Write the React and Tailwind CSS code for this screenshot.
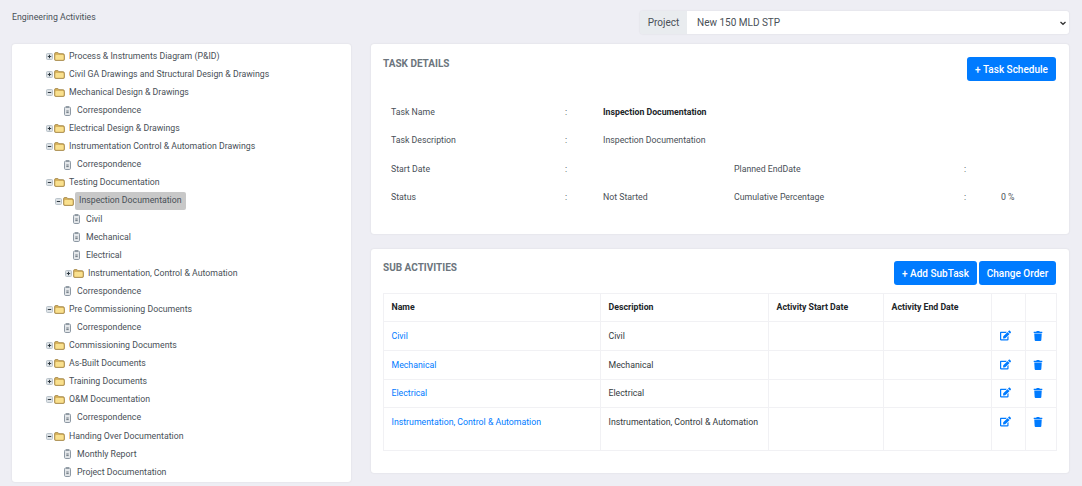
import { FaEdit, FaTrash } from 'react-icons/fa';

const TREE = [
  { label: 'Process & Instruments Diagram (P&ID)', type: 'plus', level: 0 },
  { label: 'Civil GA Drawings and Structural Design & Drawings', type: 'plus', level: 0 },
  { label: 'Mechanical Design & Drawings', type: 'minus', level: 0 },
  { label: 'Correspondence', type: 'doc', level: 0 },
  { label: 'Electrical Design & Drawings', type: 'plus', level: 0 },
  { label: 'Instrumentation Control & Automation Drawings', type: 'minus', level: 0 },
  { label: 'Correspondence', type: 'doc', level: 0 },
  { label: 'Testing Documentation', type: 'minus', level: 0 },
  { label: 'Inspection Documentation', type: 'minus', level: 1, selected: true },
  { label: 'Civil', type: 'doc', level: 1 },
  { label: 'Mechanical', type: 'doc', level: 1 },
  { label: 'Electrical', type: 'doc', level: 1 },
  { label: 'Instrumentation, Control & Automation', type: 'plus', level: 2 },
  { label: 'Correspondence', type: 'doc', level: 0 },
  { label: 'Pre Commissioning Documents', type: 'minus', level: 0 },
  { label: 'Correspondence', type: 'doc', level: 0 },
  { label: 'Commissioning Documents', type: 'plus', level: 0 },
  { label: 'As-Built Documents', type: 'plus', level: 0 },
  { label: 'Training Documents', type: 'plus', level: 0 },
  { label: 'O&M Documentation', type: 'minus', level: 0 },
  { label: 'Correspondence', type: 'doc', level: 0 },
  { label: 'Handing Over Documentation', type: 'minus', level: 0 },
  { label: 'Monthly Report', type: 'doc', level: 0 },
  { label: 'Project Documentation', type: 'doc', level: 0 },
];

const SUBTASKS = [
  { name: 'Civil', rowClass: 'h-[29px]', padClass: 'pt-[8px]' },
  { name: 'Mechanical', rowClass: 'h-[29px]', padClass: 'pt-[8px]' },
  { name: 'Electrical', rowClass: 'h-[28px]', padClass: 'pt-[7px]' },
  { name: 'Instrumentation, Control & Automation', rowClass: 'h-[43px]', padClass: 'pt-[8px]' },
];

function Toggle({ open }) {
  return (
    <svg width="7" height="7" viewBox="0 0 7 7" className="shrink-0">
      <rect x="0.5" y="0.5" width="6" height="6" rx="1" fill="#dde2e6" stroke="#b9c3ca" />
      <path d="M1.8 3.5h3.4" stroke="#2f3a42" />
      {!open && <path d="M3.5 1.8v3.4" stroke="#2f3a42" />}
    </svg>
  );
}

function Folder() {
  return (
    <svg width="11" height="9" viewBox="0 0 11 9" className="shrink-0">
      <path d="M.6 7.6V1.8q0-1.2 1.2-1.2h1.8q.6 0 .9.5l.4.6h4q1.5 0 1.5 1.5v4.4q0 .8-.8.8H1.4q-.8 0-.8-.8z" fill="#d9b45e" stroke="#9a7d3e" strokeWidth="0.8" />
      <path d="M1.4 3.9q0-.8.8-.8h6.6q.8 0 .8.8v2.9q0 .9-.9.9H2.3q-.9 0-.9-.9z" fill="#f9e08e" />
    </svg>
  );
}

function Doc() {
  return (
    <svg width="7" height="10" viewBox="0 0 7 10" className="shrink-0">
      <rect x="0.5" y="1" width="6" height="8.5" rx="1.2" fill="#e4e7ea" stroke="#8d98a3" />
      <rect x="2" y="0.3" width="3" height="1.4" fill="#7f8a94" />
      <path d="M2.3 5h2.4M2.3 6.6h2.4" stroke="#5f6a74" strokeWidth="0.9" />
    </svg>
  );
}

function TreeRow({ item }) {
  const isDoc = item.type === 'doc';
  const indent = ['pl-[34px]', 'pl-[43px]', 'pl-[53px]'][item.level];
  const docIndent = ['pl-[52px]', 'pl-[61px]'][item.level];

  if (isDoc) {
    return (
      <div className={`flex h-[18.09px] items-center gap-[6px] ${docIndent}`}>
        <Doc />
        <span>{item.label}</span>
      </div>
    );
  }
  return (
    <div className={`flex h-[18.09px] items-center ${indent}`}>
      <Toggle open={item.type === 'minus'} />
      <span className="ml-[1px]"><Folder /></span>
      {item.selected ? (
        <span className="ml-[1px] rounded-[2px] bg-[#c8c8c8] px-[4px] py-[2px]">{item.label}</span>
      ) : (
        <span className="ml-[4px]">{item.label}</span>
      )}
    </div>
  );
}

function Detail({ label, value, bold }) {
  return (
    <>
      <div>{label}</div>
      <div>:</div>
      <div className={bold ? 'font-bold text-[#212529]' : ''}>{value}</div>
    </>
  );
}

export default function App() {
  return (
    <div className="flex h-[486px] w-[1082px] gap-[20px] overflow-hidden bg-[#eeeef4] pl-[12px] pr-[13px] font-['Roboto',sans-serif] text-[8.75px] text-[#495057]">
      <div className="w-[339px] shrink-0">
        <div className="flex h-[44px] items-start pt-[11px]">Engineering Activities</div>
        <div className="h-[438px] rounded-[3px] bg-white pt-[3.4px] shadow-[0_0_2px_rgba(0,0,0,0.1)]">
          {TREE.map((item, i) => <TreeRow key={i} item={item} />)}
        </div>
      </div>

      <div className="flex w-[698px] flex-col">
        <div className="flex h-[44px] justify-end pt-[11px] text-[10px]">
          <div className="flex h-[23px] w-[429px] overflow-hidden rounded-[3px] shadow-[0_0_2px_rgba(0,0,0,0.1)]">
            <div className="flex w-[47px] items-center justify-center bg-[#e9ecef]">Project</div>
            <div className="flex flex-1 items-center justify-between bg-white pl-[10px] pr-[2px]">
              <span>New 150 MLD STP</span>
              <svg width="8" height="8" viewBox="0 0 8 8"><path d="M1.5 3l2.5 2.3L6.5 3" fill="none" stroke="#333" strokeWidth="1.3" /></svg>
            </div>
          </div>
        </div>

        <div className="h-[190px] rounded-[3px] bg-white shadow-[0_0_2px_rgba(0,0,0,0.1)]">
          <div className="flex items-start justify-between pl-[12px] pr-[13px] pt-[12px]">
            <div className="text-[10px] font-bold text-[#6c757d]">TASK DETAILS</div>
            <button className="mt-[1px] h-[24px] w-[89px] rounded-[3px] bg-[#007bff] text-[10px] font-medium text-white">+ Task Schedule</button>
          </div>
          <div className="mt-[17.3px] grid grid-cols-[174px_38px_131px_230px_37px_auto] auto-rows-[28.4px] items-center pl-[20px]">
            <Detail label="Task Name" value="Inspection Documentation" bold />
            <div></div><div></div><div></div>
            <Detail label="Task Description" value="Inspection Documentation" />
            <div></div><div></div><div></div>
            <Detail label="Start Date" value="" />
            <Detail label="Planned EndDate" value="" />
            <Detail label="Status" value="Not Started" />
            <Detail label="Cumulative Percentage" value="0 %" />
          </div>
        </div>

        <div className="mt-[15px] h-[224px] rounded-[3px] bg-white pl-[12px] pr-[13px] shadow-[0_0_2px_rgba(0,0,0,0.1)]">
          <div className="flex h-[44px] items-start justify-between">
            <div className="pt-[11px] text-[10px] font-bold text-[#6c757d]">SUB ACTIVITIES</div>
            <div className="flex gap-[2px] pt-[12px]">
              <button className="h-[24px] w-[83px] rounded-[3px] bg-[#007bff] text-[10px] font-medium text-white">+ Add SubTask</button>
              <button className="h-[24px] w-[77px] rounded-[3px] bg-[#007bff] text-[10px] font-medium text-white">Change Order</button>
            </div>
          </div>
          <table className="w-[673px] table-fixed border-collapse text-[#343a40]">
            <colgroup>
              <col className="w-[217px]" />
              <col className="w-[168px]" />
              <col className="w-[115px]" />
              <col className="w-[108px]" />
              <col className="w-[34px]" />
              <col className="w-[31px]" />
            </colgroup>
            <thead>
              <tr className="h-[28px] text-left font-bold text-[#212529]">
                <th className="border border-[#f1f1f4] pl-[7.5px]">Name</th>
                <th className="border border-[#f1f1f4] pl-[7.5px]">Description</th>
                <th className="border border-[#f1f1f4] pl-[7.5px]">Activity Start Date</th>
                <th className="border border-[#f1f1f4] pl-[7.5px]">Activity End Date</th>
                <th className="border border-[#f1f1f4]"></th>
                <th className="border border-[#f1f1f4]"></th>
              </tr>
            </thead>
            <tbody>
              {SUBTASKS.map((row) => (
                <tr key={row.name} className={row.rowClass}>
                  <td className={`border border-[#f1f1f4] pl-[7.5px] align-top text-[#007bff] ${row.padClass}`}>{row.name}</td>
                  <td className={`border border-[#f1f1f4] pl-[7.5px] align-top ${row.padClass}`}>{row.name}</td>
                  <td className="border border-[#f1f1f4]"></td>
                  <td className="border border-[#f1f1f4]"></td>
                  <td className={`border border-[#f1f1f4] pl-[8px] align-top text-[#007bff] ${row.padClass}`}><FaEdit size={11} /></td>
                  <td className={`border border-[#f1f1f4] pl-[7px] align-top text-[#007bff] ${row.padClass}`}><FaTrash size={10} className="mt-[1px]" /></td>
                </tr>
              ))}
            </tbody>
          </table>
        </div>
      </div>
    </div>
  );
}
